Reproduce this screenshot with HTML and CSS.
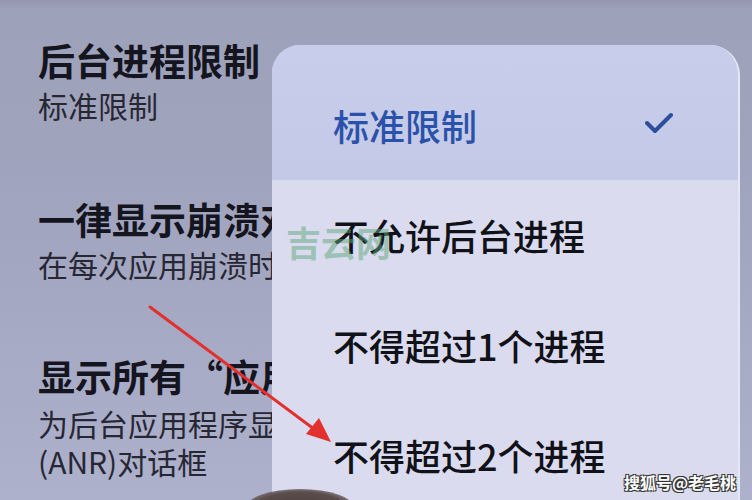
FILE: index.html
```html
<!DOCTYPE html>
<html>
    <head>
        <meta charset="utf-8" />
        <title>开发者选项</title>
        <link rel="stylesheet" href="styles.css">
    </head>
    <body>
        <div class="screen">
            <ul class="settings">
                <li class="row row-active">
                    <p class="title">后台进程限制</p>
                    <p class="sub">标准限制</p>
                </li>
                <li class="row">
                    <p class="title">一律显示崩溃对话框</p>
                    <p class="sub">在每次应用崩溃时显示对话框</p>
                </li>
                <li class="row">
                    <p class="title">显示所有“应用无响应”</p>
                    <p class="sub">为后台应用程序显示“应用无响应”</p>
                    <p class="sub">(ANR)对话框</p>
                </li>
            </ul>

            <!-- 弹出的选项菜单 -->
            <div class="menu">
                <div class="item current">
                    <span>标准限制</span>
                    <svg class="check" width="28" height="22" viewBox="0 0 28 22">
                        <polyline points="2,11 10,19 26,3" fill="none" stroke="#2c4f9c" stroke-width="4" stroke-linecap="round" stroke-linejoin="round" />
                    </svg>
                </div>
                <div class="item"><span>不允许后台进程</span></div>
                <div class="item"><span>不得超过1个进程</span></div>
                <div class="item"><span>不得超过2个进程</span></div>
            </div>

            <!-- 红色箭头标注 -->
            <svg class="arrow" width="752" height="500" viewBox="0 0 752 500">
                <line x1="150" y1="307" x2="318" y2="432" stroke="#e2302e" stroke-width="3" stroke-linecap="round" />
                <polygon points="331,442 306,434 319,418" fill="#e2302e" />
            </svg>

            <div class="mark-green">吉云网</div>
            <div class="mark-sohu">搜狐号@老毛桃</div>
            <div class="finger"></div>
        </div>
    </body>
</html>
```

FILE: styles.css
```css
* {
    margin: 0;
    padding: 0
}

ul {
    list-style: none
}

body {
    font-family: "Noto Sans CJK SC", "Noto Sans", sans-serif;
    background-color: #8c8da5;
}

.screen {
    width: 752px;
    height: 500px;
    position: relative;
    overflow: hidden;
    background: linear-gradient(180deg, #8e90a7 0, #9a9db6 8px, #a5a8c2 60%, #aeb1cb 100%);
    white-space: nowrap;
}

.settings {
    padding-top: 0;
}

.row {
    padding: 39px 0 32px 38px;
}

.row-active {
    padding-top: 38px;
    padding-bottom: 34px;
    background: linear-gradient(180deg, #9597b0 0, #9ea1ba 10px, #a0a3bc 100%);
}

.title {
    font-size: 37px;
    line-height: 44px;
    font-weight: 700;
    color: #15151f;
    margin-bottom: 4px;
}

.sub {
    font-size: 30px;
    line-height: 38px;
    color: #272734;
}

.row:last-child .title {
    margin-bottom: 6px;
}

.menu {
    position: absolute;
    left: 272px;
    top: 45px;
    width: 466px;
    height: 480px;
    border-radius: 28px 30px 0 0;
    background-color: #dadbee;
    border-right: 2px solid #e6e7f4;
    overflow: hidden;
}

.item {
    height: 110px;
    padding: 0 65px 0 61px;
    display: flex;
    align-items: center;
    justify-content: space-between;
    font-size: 36px;
    color: #111118;
    font-weight: 500;
}

.item.current {
    height: 110px;
    padding-top: 25px;
    background: linear-gradient(180deg, #c7cdea 0, #c3c9e6 100%);
    color: #2a52aa;
}

.check {
    margin-top: -4px;
}

.arrow {
    position: absolute;
    left: 0;
    top: 0;
}

.mark-green {
    position: absolute;
    left: 286px;
    top: 220px;
    font-size: 35px;
    line-height: 44px;
    font-weight: 700;
    color: rgba(96, 168, 124, 0.5);
}

.mark-sohu {
    position: absolute;
    left: 624px;
    top: 470px;
    font-size: 16px;
    line-height: 24px;
    font-weight: 700;
    color: #fff;
    text-shadow: 1px 1px 0 #333, -1px -1px 0 #333, 1px -1px 0 #333, -1px 1px 0 #333;
}

.finger {
    position: absolute;
    left: 245px;
    top: 489px;
    width: 110px;
    height: 40px;
    border-radius: 50%;
    background: radial-gradient(ellipse at center, #4a3c3a 0, #5b4d4c 60%, rgba(90, 80, 80, 0) 100%);
}
```
